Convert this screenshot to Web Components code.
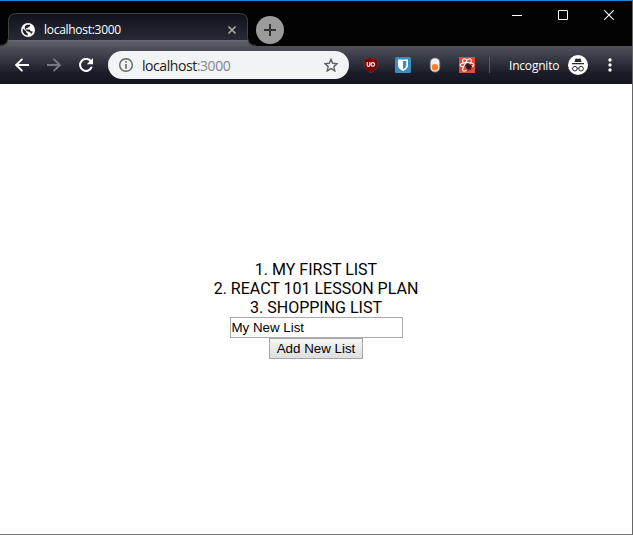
<!DOCTYPE html>
<html lang="en"><head><meta charset="utf-8"><title>localhost:3000</title>
<style>html,body{margin:0;height:100%;overflow:hidden;background:#fff}</style></head>
<body><browser-window></browser-window>
<script>
const define=(name,html)=>customElements.define(name,class extends HTMLElement{
  constructor(){super();this.attachShadow({mode:'open'}).innerHTML=html;}
});

const icons={
 globe:[14,14,'<circle cx="7" cy="7" r="7" fill="#fff"/><path d="M2 5.5l3.3 3 .2 1.5 1.3.7v1.8C3.8 12.3 1.5 9.7 1.6 7zM6 1.7h3l.2 1.4-1.4 1L6.3 5 5 5.3l.3 1.1h3.2l1.3 1.9 2 .2c-.3 1-.9 1.9-1.8 2.6L9.5 9.8 8.2 8.9 5.8 8 3.7 5.6 4 3.1z" fill="#20212b"/>'],
 close:[8,8,'<path d="M.5.5l7 7M7.5.5l-7 7" stroke="#a0a0a2" stroke-width="1.6"/>'],
 plus:[28,28,'<circle cx="14" cy="14" r="14" fill="#9b9b9b"/><path d="M8 14h12M14 8v12" stroke="#333" stroke-width="2"/>'],
 min:[10,10,'<path d="M0 5.5h10" stroke="#fff"/>'],
 max:[10,10,'<path d="M.5.5h9v9h-9z" fill="none" stroke="#fff"/>'],
 quit:[10,10,'<path d="M.3.3l9.4 9.4M9.7.3L.3 9.7" stroke="#fff" stroke-width="1.1"/>'],
 back:[14,14,'<path d="M14 7H1.5M7.4.8L1.2 7l6.2 6.2" fill="none" stroke="#fff" stroke-width="1.9"/>'],
 forward:[14,14,'<path d="M0 7h12.5M6.6.8L12.8 7l-6.2 6.2" fill="none" stroke="#777982" stroke-width="1.9"/>'],
 reload:[14,14,'<path d="M11.7 3A6 6 0 1 0 12.8 8.8" fill="none" stroke="#fff" stroke-width="2"/><path d="M14 0v6.2H7.8z" fill="#fff"/>'],
 info:[14,14,'<circle cx="7" cy="7" r="6.3" fill="none" stroke="#5f6368" stroke-width="1.4"/><path d="M7 3.2v1.6M7 6v4.8" stroke="#5f6368" stroke-width="1.6"/>'],
 star:[14,14,'<path d="M7 1.3l1.7 4 4.4.4-3.3 2.9 1 4.3L7 10.6l-3.8 2.3 1-4.3L.9 5.7l4.4-.4z" fill="none" stroke="#5f6368" stroke-width="1.4"/>'],
 shield:[16,16,'<path d="M8 .3c2 1.3 4 1.7 6.7 1.6v6.2c0 3.2-2.7 5.4-6.7 7.6-4-2.2-6.7-4.4-6.7-7.6V1.9C4 2 6 1.6 8 .3z" fill="#800000" stroke="#62434b" stroke-width=".6"/><path d="M4.2 5v3.2q0 1.2 1.1 1.2h.4q1.1 0 1.1-1.2V5" fill="none" stroke="#fff" stroke-width="1.1"/><circle cx="9.8" cy="7.4" r="1.8" fill="none" stroke="#fff" stroke-width="1.2"/>'],
 vault:[16,16,'<rect width="16" height="16" rx="1.5" fill="#3c8dbc"/><path d="M3 2.5h10v6c0 2.4-2.4 4.3-5 5.6-2.6-1.3-5-3.2-5-5.6z" fill="#fff"/><path d="M8 4h3.3v4.4c0 1.4-1.4 2.8-3.3 4z" fill="#3c8dbc"/>'],
 pill:[16,16,'<rect x="3.2" y=".9" width="9.6" height="14.2" rx="4.7" fill="#eee" stroke="#70747a" stroke-width=".8"/><circle cx="8" cy="10.2" r="3.2" fill="#ff7d28"/>'],
 react:[16,16,'<rect width="16" height="16" fill="#dd4b39"/><g fill="none" stroke="#fff" stroke-width="1.1"><path d="M8 3.3C6.5 1.7 4.2 1 3.8 2.8c-.3 1.4.1 2.5.6 3.3C2 6.4 1 7.2 1.2 8.1c.2 1 1.6 1.6 3.2 1.9-1 2-.9 3.7 0 4.1 1.1.5 2.4-.4 3.6-1.8M8 3.3c1.5-1.6 3.8-2.3 4.2-.5.3 1.4-.1 2.5-.6 3.3 2.4.3 3.4 1.1 3.2 2-.1.7-.9 1.2-1.8 1.5M4.4 6.1Q8 4.8 11.6 6.1M4.4 10L8 3.3"/></g><ellipse cx="9.5" cy="9.6" rx="2.5" ry="3.2" fill="#34191a" transform="rotate(-40 9.5 9.6)"/><path d="M6 8l6 5M6.8 12.7l6-5.7M9 6.5v7.5M7 9.5h6" stroke="#34191a" stroke-width=".9"/>'],
 incognito:[20,20,'<circle cx="10" cy="10" r="10" fill="#fff"/><path d="M6.4 7l1-3.2 1.2-.2L10 4l1.4-.4 1.2.2 1 3.2zM4 8h12v1.2H4z" fill="#252833"/><g fill="none" stroke="#252833" stroke-width="1"><circle cx="6.9" cy="13.7" r="2.3"/><circle cx="13.1" cy="13.7" r="2.3"/><path d="M9.2 13.3q.8-.6 1.6 0"/></g>'],
 dots:[4,14,'<g fill="#fff"><circle cx="2" cy="2" r="1.7"/><circle cx="2" cy="7" r="1.7"/><circle cx="2" cy="12" r="1.7"/></g>']
};
customElements.define('ui-icon',class extends HTMLElement{
 constructor(){super();this.attachShadow({mode:'open'});}
 connectedCallback(){const [w,h,p]=icons[this.getAttribute('name')];
  this.shadowRoot.innerHTML=`<style>:host{display:block;flex:none;width:${w}px;height:${h}px}svg{display:block}</style><svg width="${w}" height="${h}" viewBox="0 0 ${w} ${h}" aria-hidden="true">${p}</svg>`;}
});

define('browser-tab',`<style>
:host{display:grid;width:256px;height:33px;flex:none;font:12px "Open Sans",sans-serif;color:#fff}
svg,.row{grid-area:1/1}
.row{display:flex;align-items:center;height:32px;padding:1px 20px 0 21px;box-sizing:border-box}
.label{flex:1;margin-left:9px;letter-spacing:-.28px;white-space:nowrap}
</style><svg width="256" height="33" aria-hidden="true">
<defs><linearGradient id="g" x2="0" y2="1"><stop stop-color="#10121a"/><stop offset=".8" stop-color="#272936"/><stop offset=".81" stop-color="#696b74"/><stop offset=".88" stop-color="#5a5c66"/><stop offset="1" stop-color="#53555f"/></linearGradient></defs>
<path d="M0 33q8 0 8-8V8.5q0-8 8-8h224q8 0 8 8V25q0 8 8 8z" fill="url(#g)"/>
<path d="M0 32.5q8 0 8.5-8v-16q0-8 8-8h223q8 0 8 8v16q.5 8 8.5 8" fill="none" stroke="#424242"/></svg>
<div class="row"><ui-icon name="globe"></ui-icon><span class="label"><slot></slot></span><ui-icon name="close"></ui-icon></div>`);

define('title-bar',`<style>
:host{display:flex;height:46px;box-sizing:border-box;border-top:1px solid #1883d7;background:#030303;padding-top:12px}
.add{margin:3px 0 0}
.controls{display:flex;gap:36px;margin:-3px 18px 0 auto}
</style><browser-tab>localhost:3000</browser-tab><ui-icon class="add" name="plus"></ui-icon>
<div class="controls"><ui-icon name="min"></ui-icon><ui-icon name="max"></ui-icon><ui-icon name="quit"></ui-icon></div>`);

define('address-bar',`<style>
:host{display:flex;align-items:center;width:241px;height:28px;border-radius:14px;background:#f1f3f4;box-sizing:border-box;padding:0 11px;font:14px "Open Sans",sans-serif;color:#202124}
.url{flex:1;margin-left:9px;letter-spacing:-.43px;white-space:nowrap}.port{color:#80868b}
</style><ui-icon name="info"></ui-icon><span class="url">localhost<span class="port">:3000</span></span><ui-icon name="star"></ui-icon>`);

define('tool-bar',`<style>
:host{display:flex;align-items:center;height:38px;box-sizing:border-box;padding:0 20px 0 15px;background:linear-gradient(#50525c,#353742 35%,#1b1d29 70%,#12141d);color:#fff;font:12px "Open Sans",sans-serif}
.nav{display:flex;gap:18px;margin-right:15px}
.ext{display:flex;gap:16px;margin-left:14px}
.line{width:1px;height:16px;background:#555761;margin:0 19px 0 14px}
.mode{width:51px;letter-spacing:-.2px;white-space:nowrap;margin-right:8px}
.menu{margin-left:auto}
</style><div class="nav"><ui-icon name="back"></ui-icon><ui-icon name="forward"></ui-icon><ui-icon name="reload"></ui-icon></div>
<address-bar></address-bar>
<div class="ext"><ui-icon name="shield"></ui-icon><ui-icon name="vault"></ui-icon><ui-icon name="pill"></ui-icon><ui-icon name="react"></ui-icon></div>
<div class="line"></div><span class="mode">Incognito</span><ui-icon name="incognito"></ui-icon><ui-icon class="menu" name="dots"></ui-icon>`);

define('list-page',`<style>
:host{display:flex;flex-direction:column;align-items:center;justify-content:center;box-sizing:border-box;padding-top:1px;font:16px/19px Roboto,sans-serif;color:#000;background:#fff}
input{display:block;width:173px;height:21px;box-sizing:border-box;border:1px solid #a9a9a9;padding:1px;margin:0;font:13.333px "Liberation Sans",Arial,sans-serif;background:#fff;color:#000;border-radius:0}
button{display:block;width:94px;height:21px;box-sizing:border-box;border:1px solid #a6a6a6;padding:0;margin:0;font:13.333px "Liberation Sans",Arial,sans-serif;background:linear-gradient(#f5f5f5,#dedede);color:#000;border-radius:0;white-space:nowrap}
</style><div>1. MY FIRST LIST</div><div>2. REACT 101 LESSON PLAN</div><div>3. SHOPPING LIST</div>
<input value="My New List" aria-label="List name"><button>Add New List</button>`);

define('browser-window',`<style>
:host{display:grid;grid-template-rows:46px 38px 1fr;width:633px;height:535px;box-sizing:border-box;border-right:1px solid #666;border-bottom:1px solid #777}
</style><title-bar></title-bar><tool-bar></tool-bar><list-page></list-page>`);
</script></body></html>
